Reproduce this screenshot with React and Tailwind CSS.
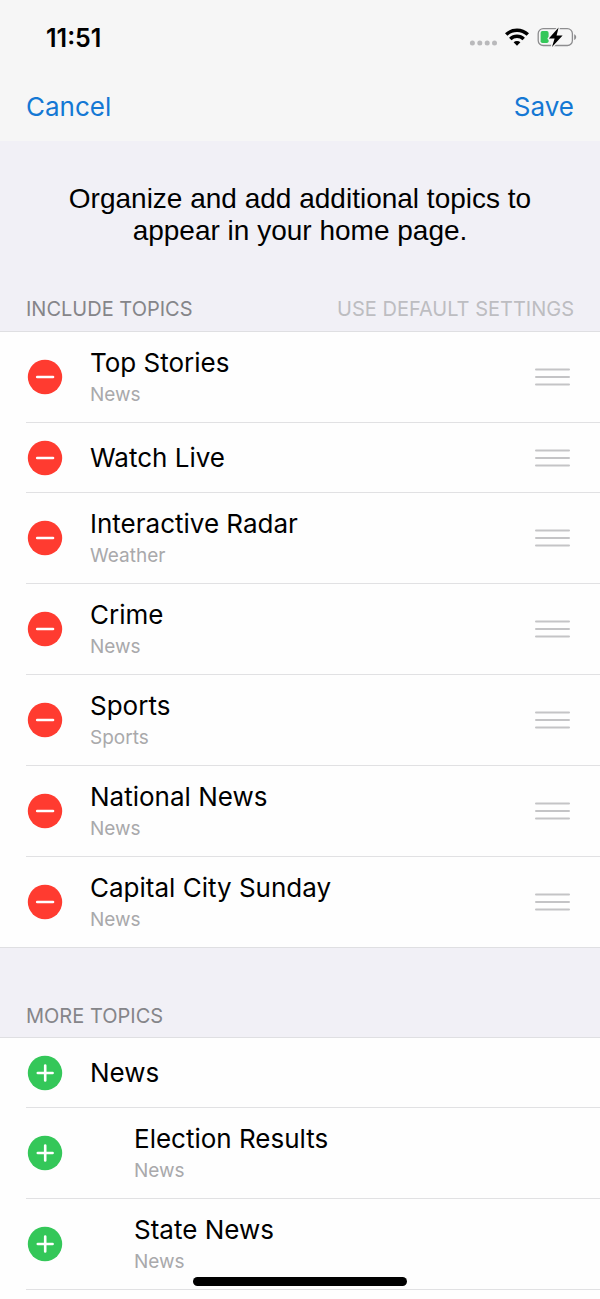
import React from "react";

const includedTopics = [
  { title: "Top Stories", category: "News" },
  { title: "Watch Live" },
  { title: "Interactive Radar", category: "Weather" },
  { title: "Crime", category: "News" },
  { title: "Sports", category: "Sports" },
  { title: "National News", category: "News" },
  { title: "Capital City Sunday", category: "News" },
];

const moreTopics = [
  { title: "News" },
  { title: "Election Results", category: "News", nested: true },
  { title: "State News", category: "News", nested: true },
];

function SignalDots() {
  return (
    <svg className="w-7 h-6" viewBox="0 0 28 24" fill="#b9b9bb" aria-hidden="true">
      <circle cx="3.4" cy="17" r="2.5" />
      <circle cx="10.8" cy="17" r="2.5" />
      <circle cx="18.2" cy="17" r="2.5" />
      <circle cx="25.5" cy="17" r="2.5" />
    </svg>
  );
}

function WifiIcon() {
  return (
    <svg className="w-6 h-6" viewBox="0 0 24 24" fill="none" stroke="#000" strokeWidth="3.5" aria-hidden="true">
      <path d="M1.2 8.6a15.6 15.6 0 0 1 21.6 0" />
      <path d="M5.3 12.9a9.7 9.7 0 0 1 13.4 0" />
      <path d="M12 19.8l-3.4-3.5a4.8 4.8 0 0 1 6.8 0z" fill="#000" stroke="none" />
    </svg>
  );
}

function BatteryIcon() {
  return (
    <svg className="w-10 h-6" viewBox="0 1 40 24" fill="none" aria-hidden="true">
      <rect x="1.2" y="3.7" width="34.2" height="16.8" rx="5" stroke="#8d8d8f" strokeWidth="1.3" />
      <path d="M37.2 9.2c1.3.5 2 1.6 2 2.9s-.7 2.4-2 2.9z" fill="#8d8d8f" />
      <rect x="3.6" y="6.1" width="8" height="12" rx="1.8" fill="#34c759" />
      <path
        d="M21.6 2.6L11.8 13.5h5.8L15 21.9 25.6 10.6h-6z"
        fill="#000"
        stroke="#f6f6f6"
        strokeWidth="2.6"
        paintOrder="stroke"
        strokeLinejoin="round"
      />
    </svg>
  );
}

function StatusBar() {
  return (
    <div className="flex h-[72px] items-center justify-between pt-[3px] pl-[46px] pr-[23px]">
      <span className="text-[25px] font-semibold leading-8">11:51</span>
      <div className="flex items-center gap-2">
        <SignalDots />
        <WifiIcon />
        <BatteryIcon />
      </div>
    </div>
  );
}

function RoundIcon({ plus }) {
  return (
    <svg className="w-9 h-9" viewBox="0 0 36 36" aria-hidden="true">
      <circle cx="18" cy="18" r="17.2" fill={plus ? "#34c759" : "#ff3b30"} />
      <path
        d={plus ? "M10.8 18h14.8M18.2 10.6v14.8" : "M10.2 18h15.8"}
        stroke="#fff"
        strokeWidth="2.6"
        strokeLinecap="round"
      />
    </svg>
  );
}

function DragHandle() {
  return (
    <svg className="w-9 h-5" viewBox="0 0 36 20" stroke="#c4c4c6" strokeWidth="2" strokeLinecap="round" aria-hidden="true">
      <path d="M2 2.5h33M2 10h33M2 17.5h33" />
    </svg>
  );
}

function TopicRow({ topic, addable }) {
  const { title, category, nested } = topic;
  return (
    <li className="pl-[26px]">
      <div
        className={`flex items-center border-b border-[#e1e1e3] pr-[30px] ${category ? "h-[91px]" : "h-[70px]"}`}
      >
        <button type="button" aria-label={`${addable ? "Add" : "Remove"} ${title}`} className="ml-px shrink-0">
          <RoundIcon plus={addable} />
        </button>
        <div className={`flex-1 ${nested ? "ml-[71px]" : "ml-[27px]"} ${category ? "pt-[3px]" : ""}`}>
          <p className="text-[26px] leading-8">{title}</p>
          {category && <p className="text-[19px] leading-8 text-[#a9a9ab]">{category}</p>}
        </div>
        {!addable && (
          <button type="button" aria-label={`Reorder ${title}`} className="shrink-0">
            <DragHandle />
          </button>
        )}
      </div>
    </li>
  );
}

export default function App() {
  return (
    <div className="flex min-h-screen flex-col bg-[#fefefe] font-['Inter',sans-serif] text-black">
      <header className="bg-[#f6f6f6]">
        <StatusBar />
        <nav className="flex h-[69px] items-center justify-between px-[26px] text-[26px] leading-8 text-[#1478d4]">
          <button type="button">Cancel</button>
          <button type="button">Save</button>
        </nav>
      </header>

      <main>
        <section className="bg-[#f1f0f6]">
          <p className="mx-auto max-w-[500px] pt-[42px] text-center font-['Liberation_Sans',sans-serif] text-[28px] leading-8">
            Organize and add additional topics to appear in your home page.
          </p>
          <div className="flex items-center justify-between border-b border-[#dfdfe2] px-[26px] pt-[47px] pb-[7px] text-xl leading-[30px]">
            <h2 className="text-[#858589]">INCLUDE TOPICS</h2>
            <button type="button" className="text-[#bdbdc1]">
              USE DEFAULT SETTINGS
            </button>
          </div>
        </section>
        <ul>
          {includedTopics.map((topic) => (
            <TopicRow key={topic.title} topic={topic} />
          ))}
        </ul>

        {/* the top border runs into the last row's divider */}
        <section className="-mt-px border-y border-[#dfdfe2] bg-[#f1f0f6] px-[26px] pt-[53px] pb-[6px]">
          <h2 className="text-xl leading-[30px] text-[#858589]">MORE TOPICS</h2>
        </section>
        <ul>
          {moreTopics.map((topic) => (
            <TopicRow key={topic.title} topic={topic} addable />
          ))}
        </ul>
      </main>

      {/* Home indicator */}
      <div className="fixed bottom-[13px] left-1/2 h-[9px] w-[214px] -translate-x-1/2 rounded-full bg-black" />
    </div>
  );
}
